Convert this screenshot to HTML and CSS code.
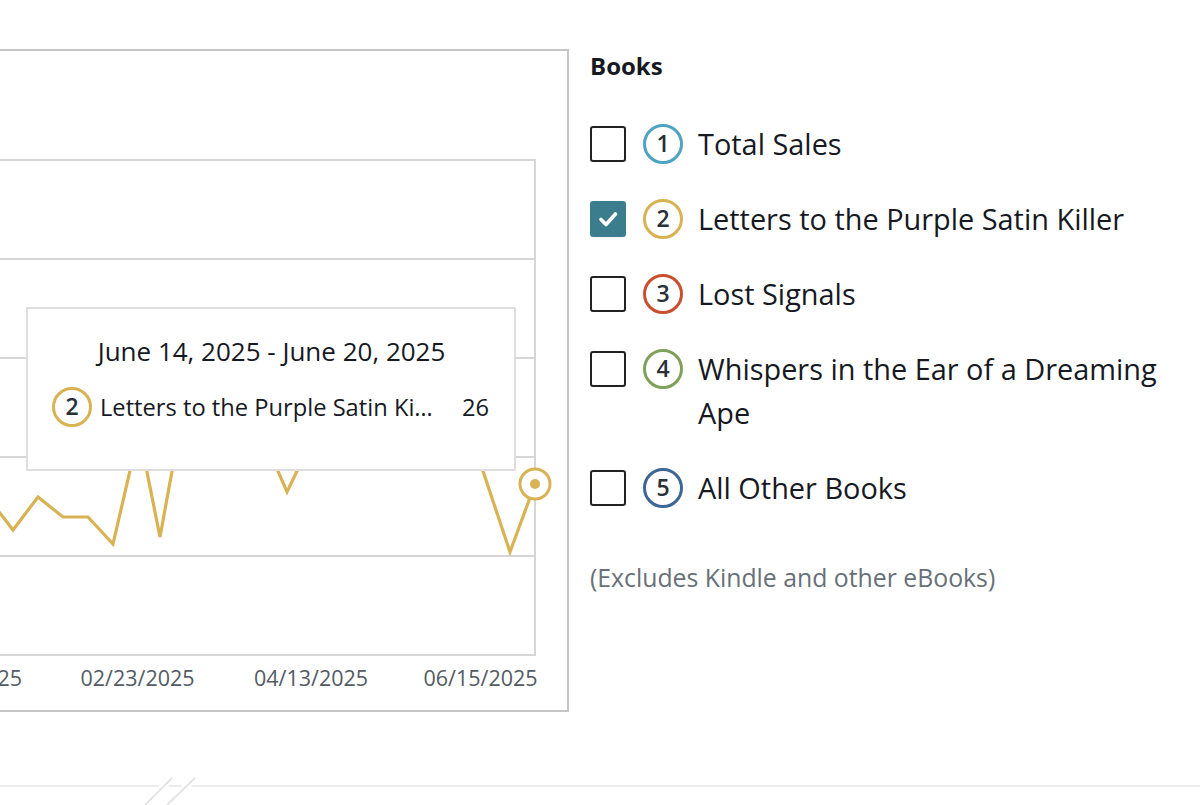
FILE: index.html
```html
<!DOCTYPE html>
<html lang="en">
<head>
<meta charset="utf-8">
<title>Books sales chart</title>
<link rel="stylesheet" href="styles.css">
</head>
<body>
<div class="page">
  <main class="main">
    <section class="chart-card">
      <svg class="chart" width="605" height="659" viewBox="-38 51 605 659" xmlns="http://www.w3.org/2000/svg">
        <g class="grid">
          <line x1="-38" y1="160" x2="535" y2="160"/>
          <line x1="-38" y1="259" x2="535" y2="259"/>
          <line x1="-38" y1="358" x2="535" y2="358"/>
          <line x1="-38" y1="457" x2="535" y2="457"/>
          <line x1="-38" y1="556" x2="535" y2="556"/>
          <line x1="-38" y1="655" x2="535" y2="655"/>
          <line x1="535" y1="159" x2="535" y2="656"/>
        </g>
        <path class="series" d="M -38 470 L -14 500 L 0 513 L 13 530 L 38 497 L 63 517 L 88 517 L 113 544 L 139 432 L 160 537 L 185 400 L 215 380 L 240 410 L 265 441 L 287 492 L 310 444 L 340 400 L 380 430 L 420 390 L 470 432 L 510 552 L 535 484"/>
        <circle class="hover-ring" cx="535" cy="484" r="15"/>
        <circle class="hover-dot" cx="535" cy="484" r="5"/>
        <g class="ticks">
          <text x="-35" y="686">01/05/2025</text>
          <text x="137.5" y="686">02/23/2025</text>
          <text x="311" y="686">04/13/2025</text>
          <text x="480.5" y="686">06/15/2025</text>
        </g>
      </svg>
      <div class="tooltip">
        <div class="tooltip-title">June 14, 2025 - June 20, 2025</div>
        <div class="tooltip-row">
          <span class="badge badge-gold tooltip-badge">2</span>
          <span class="tooltip-label">Letters to the Purple Satin Ki…</span>
          <span class="tooltip-value">26</span>
        </div>
      </div>
    </section>

    <aside class="legend">
      <h2 class="legend-title">Books</h2>
      <ul class="legend-list">
        <li class="legend-item">
          <span class="checkbox"></span>
          <span class="badge badge-teal">1</span>
          <span class="legend-label">Total Sales</span>
        </li>
        <li class="legend-item">
          <span class="checkbox checked">
            <svg viewBox="0 0 36 36" width="36" height="36"><path d="M11 18.5 L16 23.5 L25.5 13" fill="none" stroke="#fff" stroke-width="3.6" stroke-linecap="round" stroke-linejoin="round"/></svg>
          </span>
          <span class="badge badge-gold">2</span>
          <span class="legend-label">Letters to the Purple Satin Killer</span>
        </li>
        <li class="legend-item">
          <span class="checkbox"></span>
          <span class="badge badge-red">3</span>
          <span class="legend-label">Lost Signals</span>
        </li>
        <li class="legend-item">
          <span class="checkbox"></span>
          <span class="badge badge-green">4</span>
          <span class="legend-label">Whispers in the Ear of a Dreaming Ape</span>
        </li>
        <li class="legend-item">
          <span class="checkbox"></span>
          <span class="badge badge-navy">5</span>
          <span class="legend-label">All Other Books</span>
        </li>
      </ul>
      <p class="legend-note">(Excludes Kindle and other eBooks)</p>
    </aside>
  </main>

  <footer class="footer">
    <svg class="break-mark" width="70" height="34" viewBox="0 0 70 34" xmlns="http://www.w3.org/2000/svg">
      <line x1="10" y1="32" x2="37" y2="5" class="halo"/>
      <line x1="32" y1="32" x2="60" y2="5" class="halo"/>
      <line x1="10" y1="32" x2="37" y2="5" class="slash"/>
      <line x1="32" y1="32" x2="60" y2="5" class="slash"/>
    </svg>
  </footer>
</div>
</body>
</html>
```

FILE: styles.css
```css
* { box-sizing: border-box; }

html, body {
  margin: 0;
  padding: 0;
  background: #ffffff;
  overflow: hidden;
}

body {
  font-family: "Open Sans", "Liberation Sans", Arial, sans-serif;
  color: #16191f;
}

.page {
  width: 1200px;
  height: 805px;
  overflow: hidden;
}

.main {
  display: flex;
  align-items: flex-start;
  padding-top: 49px;
}

/* ---------- chart card ---------- */
.chart-card {
  position: relative;
  flex: none;
  width: 609px;
  height: 663px;
  margin-left: -40px;
  border: 2px solid #c6c6c6;
  background: #fff;
}

.chart {
  display: block;
}

.grid line {
  stroke: #d6d6d6;
  stroke-width: 2;
}

.series {
  fill: none;
  stroke: #d9b254;
  stroke-width: 3.2;
  stroke-linejoin: miter;
}

.hover-ring {
  fill: #ffffff;
  stroke: #d9b254;
  stroke-width: 3;
}

.hover-dot {
  fill: #d9b254;
}

.ticks text {
  font-family: "Open Sans", "Liberation Sans", Arial, sans-serif;
  font-size: 21.5px;
  fill: #545b64;
  text-anchor: middle;
}

/* ---------- tooltip ---------- */
.tooltip {
  position: absolute;
  left: 64px;
  top: 256px;
  width: 490px;
  height: 164px;
  background: #ffffff;
  border: 2px solid #dedede;
  padding: 26px 25px 0 24px;
}

.tooltip-title {
  font-size: 26px;
  line-height: 32px;
  text-align: center;
  color: #16191f;
  padding-left: 2px;
}

.tooltip-row {
  display: flex;
  align-items: center;
  margin-top: 20px;
  height: 40px;
}

.tooltip-badge {
  margin-right: 8px;
}

.tooltip-label {
  font-size: 23.7px;
  line-height: 30px;
  white-space: nowrap;
  color: #16191f;
}

.tooltip-value {
  margin-left: auto;
  font-size: 23.7px;
  line-height: 30px;
  color: #16191f;
}

/* ---------- badges ---------- */
.badge {
  flex: none;
  display: inline-flex;
  align-items: center;
  justify-content: center;
  width: 40px;
  height: 40px;
  border-radius: 50%;
  border: 3px solid #999;
  font-size: 23px;
  font-weight: 600;
  color: #2b2f36;
  line-height: 1;
  background: #fff;
  padding-bottom: 1px;
}

.badge-teal { border-color: #4ea3c2; }
.badge-gold { border-color: #d9b254; }
.badge-red { border-color: #c8502d; }
.badge-green { border-color: #80a15c; }
.badge-navy { border-color: #3d6596; }

/* ---------- legend ---------- */
.legend {
  margin-left: 21px;
  padding-top: 2px;
  width: 580px;
}

.legend-title {
  margin: 0;
  font-size: 24px;
  line-height: 30px;
  font-weight: 700;
  color: #16191f;
}

.legend-list {
  list-style: none;
  margin: 41px 0 0;
  padding: 0;
  display: flex;
  flex-direction: column;
  gap: 31px;
}

.legend-item {
  display: flex;
  align-items: flex-start;
}

.checkbox {
  flex: none;
  width: 36px;
  height: 36px;
  margin-top: 4px;
  border: 2px solid #222;
  border-radius: 3px;
  background: #fff;
}

.checkbox.checked {
  border: none;
  background: #3b7d8c;
}

.checkbox svg {
  display: block;
}

.legend-item .badge {
  margin-left: 17px;
  margin-top: 2px;
}

.legend-label {
  margin-left: 15px;
  font-size: 28.9px;
  line-height: 44px;
  color: #16191f;
  width: 470px;
}

.legend-note {
  margin: 52px 0 0;
  font-size: 24.8px;
  line-height: 30px;
  color: #687078;
}

/* ---------- footer ---------- */
.footer {
  position: relative;
  margin-top: 73px;
  border-top: 2px solid #ececec;
  height: 20px;
}

.break-mark {
  position: absolute;
  left: 135px;
  top: -14px;
}

.break-mark .halo {
  stroke: #ffffff;
  stroke-width: 7;
}

.break-mark .slash {
  stroke: #e4e4e4;
  stroke-width: 2;
}
```
